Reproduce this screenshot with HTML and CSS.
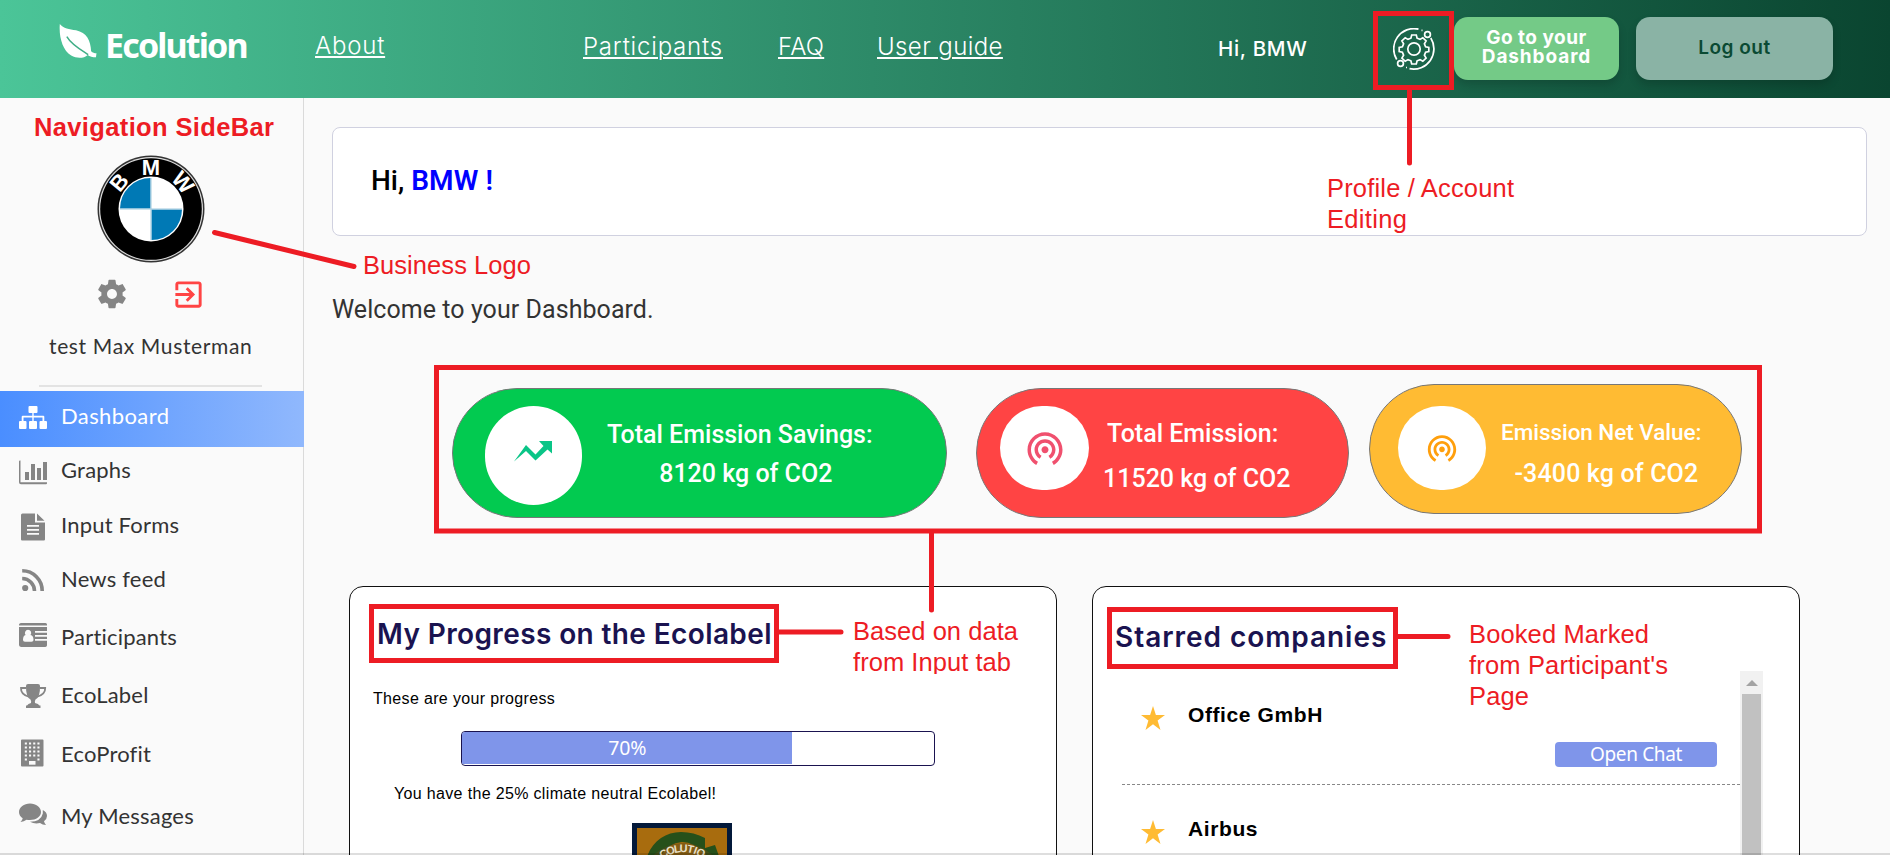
FILE: index.html
```html
<!DOCTYPE html>
<html lang="en">
<head>
<meta charset="utf-8">
<title>Ecolution Dashboard</title>
<link rel="stylesheet" href="styles.css">
</head>
<body>
<header class="topbar">
  <a class="brand">
    <svg class="leaf" viewBox="0 0 38 36"><path fill="#fff" d="M0.300 0C4 5 10 5.300 17 6.500C28 9 32 17 32.500 28C34 29.500 36 30 38 30.200L37.500 34.300C34 34.300 31 33.500 29 31.800C25 35.500 18 35.800 12 32.500C3 27 -.8 13 .3 0Z"/><path fill="none" stroke="#3fae86" stroke-width="1.500" d="M7.500 13C12 21 21 26 29.500 31.500"/></svg>
    <span class="brand-name">Ecolution</span>
  </a>
  <nav class="links">
    <a class="about">About</a><a class="parts">Participants</a><a class="faq">FAQ</a><a class="guide">User guide</a>
  </nav>
  <span class="hello">Hi, BMW</span>
  <svg class="orbit" viewBox="0 0 42 42" fill="none" stroke="#fff" stroke-width="1.700">
    <path d="M25.500 1.100A20.300 20.300 0 0 0 3.700 31.500M37.800 10A20.300 20.300 0 0 1 16.500 40.700M28.500 2.300h1M13 39.500h1"/>
    <circle cx="34.500" cy="6.500" r="2.900"/><circle cx="7.500" cy="35.500" r="2.900"/>
    <circle cx="21" cy="21" r="6.200"/>
    <path d="M18.700 7h4.600l.8 3.200 2.900 1.200 2.800-1.700 3.300 3.300-1.700 2.800 1.200 2.900 3.200.8v4l-3.200.8-1.200 2.900 1.700 2.800-3.300 3.300-2.800-1.700-2.900 1.200-.8 3.200h-4.600l-.8-3.200-2.900-1.200-2.800 1.700-3.300-3.300 1.700-2.800-1.200-2.900-3.200-.8v-4l3.200-.8 1.200-2.900-1.700-2.800 3.300-3.300 2.800 1.700 2.900-1.200z"/>
  </svg>
  <button class="btn btn-dash"><span class="l1">Go to your</span><span class="l2">Dashboard</span></button>
  <button class="btn btn-out"><span>Log out</span></button>
</header>

<div class="layout">
  <aside class="sidebar">
    <svg class="logo" viewBox="-54 -54 108 108">
      <circle r="53.500" fill="#333"/><circle r="52" fill="#ddd"/><circle r="50.800" fill="#000"/>
      <circle r="32.500" fill="#fff"/>
      <path fill="#0079b5" d="M-.5-.5V-31A30.700 30.700 0 0 0-31-.5ZM.5.500V31A30.700 30.700 0 0 0 31 .5Z"/>
      <path stroke="#9cc7dc" stroke-width="1" d="M-31 0H31M0-31V31"/>
      <g class="logo-letters"><text transform="rotate(-50)" y="-34">B</text><text y="-34">M</text><text transform="rotate(50)" y="-34">W</text></g>
    </svg>
    <div class="tools">
      <svg class="cog" viewBox="0 0 24 24" fill="#858585"><path d="M19.430 12.980c.04-.32.07-.64.07-.98s-.03-.66-.07-.98l2.110-1.650c.19-.15.24-.42.12-.64l-2-3.460c-.12-.22-.39-.3-.61-.22l-2.490 1c-.52-.4-1.080-.73-1.690-.98l-.38-2.650C14.460 2.180 14.250 2 14 2h-4c-.25 0-.46.18-.49.42l-.38 2.650c-.61.25-1.170.59-1.690.98l-2.490-1c-.23-.09-.49 0-.61.22l-2 3.460c-.13.22-.07.49.12.64l2.110 1.650c-.04.32-.07.65-.07.98s.03.66.07.98l-2.110 1.650c-.19.15-.24.42-.12.64l2 3.460c.12.22.39.3.61.22l2.490-1c.52.4 1.080.73 1.690.98l.38 2.650c.03.24.24.42.49.42h4c.25 0 .46-.18.49-.42l.38-2.650c.61-.25 1.170-.59 1.690-.98l2.490 1c.23.09.49 0 .61-.22l2-3.460c.12-.22.07-.49-.12-.64l-2.110-1.650zM12 15.500c-1.930 0-3.500-1.570-3.500-3.500s1.570-3.500 3.500-3.500 3.500 1.570 3.500 3.500-1.570 3.500-3.500 3.500z"/></svg>
      <svg class="exit" viewBox="0 0 24 24" fill="#ff4444"><path d="M10.090 15.590L11.500 17l5-5-5-5-1.410 1.410L12.670 11H3v2h9.670l-2.580 2.590zM19 3H5c-1.110 0-2 .9-2 2v4h2V5h14v14H5v-4H3v4c0 1.100.89 2 2 2h14c1.100 0 2-.9 2-2V5c0-1.100-.9-2-2-2z"/></svg>
    </div>
    <div class="user">test Max Musterman</div>
    <div class="rule"></div>
    <ul class="menu">
      <li class="active"><svg viewBox="0 0 28 28"><path d="M10.500 2h7a1 1 0 0 1 1 1v5a1 1 0 0 1-1 1h-2.800v2.800h9.600a1 1 0 0 1 1 1v4.200h1.700a1 1 0 0 1 1 1v6a1 1 0 0 1-1 1h-5.500a1 1 0 0 1-1-1v-6a1 1 0 0 1 1-1h2v-3.400h-8.800v3.400h2.300a1 1 0 0 1 1 1v6a1 1 0 0 1-1 1h-6a1 1 0 0 1-1-1v-6a1 1 0 0 1 1-1h2.300v-3.400H4.500v3.400h2a1 1 0 0 1 1 1v6a1 1 0 0 1-1 1H1a1 1 0 0 1-1-1v-6a1 1 0 0 1 1-1h1.700v-4.200a1 1 0 0 1 1-1h9.600V9h-2.800a1 1 0 0 1-1-1V3a1 1 0 0 1 1-1Z"/></svg><span>Dashboard</span></li>
      <li class="graphs"><svg viewBox="0 0 28 28"><path d="M0 3.500A1 1 0 0 1 1 2.500H1.500V24.300H28V25.500A1 1 0 0 1 27 26.300H2A2 2 0 0 1 0 24.300ZM6 14h4v8H6ZM12 6h4v16h-4ZM18 10h4v12h-4ZM24 4h4v18h-4Z"/></svg><span>Graphs</span></li>
      <li class="forms"><svg viewBox="0 0 28 28"><path fill-rule="evenodd" d="M3.500.500H16V9.500H26V26.500A1.200 1.200 0 0 1 25 27.500H3A1.200 1.200 0 0 1 2 26.500V2A1.500 1.500 0 0 1 3.500.500ZM8 12v1.800h12V12ZM8 16v1.800h12V16ZM8 20v1.800h12V20ZM18 .500 25.500 7.700H18Z"/></svg><span>Input Forms</span></li>
      <li class="news"><svg viewBox="0 0 28 28"><circle cx="6.200" cy="22" r="3.100"/><path fill="none" stroke="#858585" stroke-width="3.600" d="M3.200 12.500A12.500 12.500 0 0 1 15.500 25M3.200 4.800A20 20 0 0 1 23.200 25"/></svg><span>News feed</span></li>
      <li class="people"><svg viewBox="0 0 28 28"><path fill-rule="evenodd" d="M2 2H26.500Q28 2.200 28 3.500V4.500H0V3.500Q.3 2 2 2ZM0 6H28V10H16V11.700H28V14H16V15.700H28V18H16V19.700H28V24.500Q27.500 26 26 26H2Q0 25.700 0 24ZM9 8.800A3.200 3.200 0 0 0 6.600 14Q4 14.500 4 19Q4 20.700 6 20.700H12.500Q14.500 20.700 14.500 19Q14.500 14.500 11.500 14A3.200 3.200 0 0 0 9 8.800Z"/></svg><span>Participants</span></li>
      <li class="trophy"><svg viewBox="0 0 28 28"><path d="M7 4Q7 2 9 2H19Q21 2 21 4Q21.300 15 16.500 17.500Q15.500 19 16 21Q19.500 21.700 20.500 23.500H21.500V26H7V23.500H8Q9 21.700 12 21Q12.500 19 11.500 17.500Q6.800 15 7 4Z"/><path fill="none" stroke="#858585" stroke-width="1.800" d="M7.500 6H2Q1.500 12.500 10.500 15M20.500 6H26.200Q26.500 12.500 17.500 15"/></svg><span>EcoLabel</span></li>
      <li class="building"><svg viewBox="0 0 28 28"><path d="M3 .5H23.500A1 1 0 0 1 24.500 1.500V26.500A1 1 0 0 1 23.500 27.500H3A1 1 0 0 1 2 26.500V1.500A1 1 0 0 1 3 .5Z"/><path stroke="#fafafa" stroke-width="2" stroke-dasharray="2.100 2.100" d="M5.800 4.500H22M5.800 8.500H22M5.800 12.500H22M5.800 16.500H22M5.800 20.500H8M18.400 20.500H21"/><path fill="#fafafa" d="M10 22h6.500v3.700H10z"/></svg><span>EcoProfit</span></li>
      <li class="msgs"><svg viewBox="0 0 28 28"><path d="M11 2.500C17 2.500 22 6.300 22 11S17 19 11 19Q9 19 7.500 18.700Q5 20.800 1.500 21Q3.300 19.500 3.700 17.200Q0 14.800 0 11C0 6.300 5 2.500 11 2.500ZM23.800 9Q28 11 28 15Q28 18 25 20.200Q25.500 22.500 27 24Q23.500 24 21 22Q15.500 23.200 11 20.800Q22 20.500 23.800 12.500Z"/></svg><span>My Messages</span></li>
    </ul>
  </aside>

  <main class="content">
    <section class="greeting"><span>Hi,</span> <b>BMW !</b></section>
    <p class="welcome">Welcome to your Dashboard.</p>
    <section class="stats">
      <div class="pill green">
        <div class="disc"><svg width="38" height="22" viewBox="0 0 38 22"><path fill="#0ac587" d="M0 21.500 12 5 21.500 14.500 29.500 6 25 1H38V13.500L33.500 9.500 21.500 20.500 12 11Z"/></svg></div>
        <div class="fig"><span class="t1">Total Emission Savings:</span><span class="t2">8120 kg of CO2</span></div>
      </div>
      <div class="pill red">
        <div class="disc"><svg width="42" height="42" viewBox="0 0 24 24" fill="#f0506e"><path id="ring" d="M12 11c-1.100 0-2 .9-2 2s.9 2 2 2 2-.9 2-2-.9-2-2-2zm6 2c0-3.310-2.690-6-6-6s-6 2.690-6 6c0 2.220 1.210 4.150 3 5.190l1-1.740c-1.190-.7-2-1.970-2-3.450 0-2.210 1.790-4 4-4s4 1.790 4 4c0 1.480-.81 2.750-2 3.450l1 1.740c1.790-1.040 3-2.970 3-5.190zM12 3C6.480 3 2 7.480 2 13c0 3.700 2.010 6.920 4.990 8.650l1-1.730C5.610 18.530 4 15.960 4 13c0-4.420 3.580-8 8-8s8 3.580 8 8c0 2.960-1.610 5.530-4 6.920l1 1.730c2.990-1.730 5-4.950 5-8.650 0-5.520-4.480-10-10-10z"/></svg></div>
        <div class="fig"><span class="t1">Total Emission:</span><span class="t2">11520 kg of CO2</span></div>
      </div>
      <div class="pill amber">
        <div class="disc"><svg width="34" height="34" viewBox="0 0 24 24" fill="#ff9f0c"><use href="#ring"/></svg></div>
        <div class="fig"><span class="t1">Emission Net Value:</span><span class="t2">-3400 kg of CO2</span></div>
      </div>
    </section>
    <section class="cards">
      <article class="card progress">
        <h2>My Progress on the Ecolabel</h2>
        <p class="intro">These are your progress</p>
        <div class="bar"><div class="fill" style="width:70%"><span>70%</span></div></div>
        <p class="result">You have the 25% climate neutral Ecolabel!</p>
        <svg class="badge" viewBox="0 0 100 100">
          <path fill="#03193a" d="M0 0h100v100H0z"/><path fill="#a86c0e" d="M5 5h90v90H5z"/>
          <path fill="#26501a" d="M12 50C13 24 29 9 49 9Q62 9 73 15V25L83 22L93 50H73L74 32Q62 19 50 19Q28 21 24 50Z"/>
          <circle cx="51" cy="62" r="42" fill="#5b4a18" opacity=".5"/>
          <g class="badge-letters"><text transform="translate(51 62) rotate(-32)" y="-33">C</text><text transform="translate(51 62) rotate(-20)" y="-33">O</text><text transform="translate(51 62) rotate(-9)" y="-33">L</text><text transform="translate(51 62) rotate(1)" y="-33">U</text><text transform="translate(51 62) rotate(12)" y="-33">T</text><text transform="translate(51 62) rotate(20)" y="-33">I</text><text transform="translate(51 62) rotate(29)" y="-33">O</text></g>
        </svg>
      </article>
      <article class="card starred">
        <h2>Starred companies</h2>
        <div class="scroller">
          <div class="list">
            <div class="company first"><svg class="star" viewBox="0 0 24 24"><path d="M12 0 14.900 9H24L16.600 14.500 19.500 24 12 18.200 4.500 24 7.400 14.500 0 9H9.100Z"/></svg><span class="office">Office GmbH</span><button class="chat"><span>Open Chat</span></button></div>
            <div class="company"><svg class="star" viewBox="0 0 24 24"><path d="M12 0 14.900 9H24L16.600 14.500 19.500 24 12 18.200 4.500 24 7.400 14.500 0 9H9.100Z"/></svg><span class="airbus">Airbus</span></div>
          </div>
          <div class="track"><i class="up"></i><i class="thumb"></i></div>
        </div>
      </article>
    </section>
  </main>
</div>

<svg class="notes" width="1890" height="855">
  <g class="frames">
    <path d="M1375.500 13.500H1451.500V87.500H1375.500ZM436.500 367.500H1759.500V531H436.500ZM371.500 606.500H776.500V660.500H371.500ZM1109.500 609.500H1395.500V666.500H1109.500Z"/>
    <path stroke-linecap="round" d="M1409.500 90V163M214.500 232.500L354 266.500M931.500 533V610M779 632H841M1398 636.500H1448"/>
  </g>
  <text class="strong" x="34" y="136" textLength="240">Navigation SideBar</text>
  <text x="363" y="274" textLength="168">Business Logo</text>
  <text x="1327" y="196.500" textLength="187">Profile / Account</text>
  <text x="1327" y="227.500" textLength="80">Editing</text>
  <text x="853" y="639.500" textLength="165">Based on data</text>
  <svg width="1100" height="674"><text x="853" y="670.500" textLength="158">from Input tab</text></svg>
  <text x="1469" y="643" textLength="180">Booked Marked</text>
  <text x="1469" y="674" textLength="199">from Participant's</text>
  <text x="1469" y="705" textLength="60">Page</text>
</svg>
<div class="edge"></div>
</body>
</html>
```
FILE: styles.css
```css
* { box-sizing: border-box; }
html { height: 855px; overflow: hidden; }
body { margin: 0; width: 1890px; height: 855px; overflow: hidden; background: #fafafa; font-family: Roboto, sans-serif; color: #000; }
h2, p, ul { margin: 0; padding: 0; }
span, a, h2, p { white-space: nowrap; }
svg { display: block; flex: none; }
button { border: 0; padding: 0; }

.topbar { height: 98px; display: flex; align-items: flex-start; background: linear-gradient(90deg, #4bc598 0%, #0a4530 100%); color: #fff; font-family: Inter, sans-serif; }
.brand { display: flex; width: 256px; height: 98px; padding: 24px 0 0 59px; }
.leaf { width: 38px; height: 35px; }
.brand-name { margin: -3px 0 0 8px; font: 700 34px/48px "Noto Sans", sans-serif; letter-spacing: -1.85px; }
.links { display: flex; width: 962px; padding: 31px 0 0 59px; font-size: 24px; line-height: 32px; font-weight: 300; }
.links a { flex: none; text-decoration: underline; text-decoration-thickness: 2px; text-underline-offset: 2px; letter-spacing: .8px; }
.links .about { width: 268px; margin-top: -1px; }
.parts { width: 195px; }
.links .faq { width: 99px; letter-spacing: .2px; }
.links .guide { letter-spacing: .4px; }
.hello { width: 175px; padding-top: 35px; font-size: 20.500px; line-height: 28px; font-weight: 500; letter-spacing: .7px; }
.orbit { width: 42px; height: 42px; margin-top: 28px; }
.btn { height: 63px; margin-top: 17px; border-radius: 14px; font-family: Inter, sans-serif; font-size: 19px; display: flex; flex-direction: column; align-items: center; justify-content: center; box-shadow: 0 5px 9px rgba(0, 0, 0, .16); }
.btn-dash { width: 165px; margin-left: 19px; background: #74ca87; color: #fff; font-weight: 700; line-height: 19px; padding-bottom: 3px; }
.l1 { letter-spacing: .5px; }
.l2 { letter-spacing: .9px; }
.btn-out { width: 197px; margin-left: 17px; background: #8ab3a5; color: #0b4a33; font-weight: 600; letter-spacing: .5px; padding-bottom: 2px; }

.layout { display: flex; height: 757px; overflow: hidden; }
.sidebar { width: 304px; border-right: 1px solid #dadada; font-family: Lato, sans-serif; color: #333; flex: none; }
.logo { width: 108px; height: 108px; margin: 57px 0 0 97px; }
.logo-letters { font: 700 22px "Liberation Sans", sans-serif; fill: #fff; text-anchor: middle; }
.tools { display: flex; padding: 14px 0 0 95px; gap: 42px; }
.cog { width: 34px; height: 34px; }
.exit { width: 35px; height: 35px; }
.user { margin-top: 12px; height: 67px; padding: 6px 0 0 49px; font-size: 21px; line-height: 32px; letter-spacing: .65px; }
.rule { width: 223px; height: 2px; margin: -6px 0 4px 39px; background: #e3e3e3; }
.menu { list-style: none; }
.menu li { height: 28px; display: flex; align-items: center; gap: 14px; padding-left: 19px; font-size: 22px; line-height: 28px; letter-spacing: .2px; }
.menu svg { width: 28px; height: 28px; fill: #858585; }
.menu li.active { width: 304px; height: 56px; background: linear-gradient(90deg, #4a8eff, #90b8fd); color: #fff; letter-spacing: .4px; }
.menu .active svg { fill: #fff; margin-bottom: 2px; }
.active span { margin-bottom: 6px; }
.menu .graphs { margin-top: 9px; }
.graphs svg { margin-top: 4px; }
.menu .forms { margin-top: 27px; }
.forms svg { margin-top: 3px; }
.menu .news { margin-top: 26px; }
.news svg { margin-top: 2px; }
.menu .people { margin-top: 30px; }
.people svg { margin-bottom: 4px; }
.menu .trophy { margin-top: 30px; }
.trophy svg { margin-top: 2px; }
.menu .building { margin-top: 31px; }
.building svg { margin-bottom: 2px; }
.menu .msgs { margin-top: 34px; }
.msgs svg { margin-bottom: 2px; }

.content { width: 1586px; padding: 29px 0 0 28px; }
.greeting { width: 1535px; height: 109px; border: 1px solid #d0d1e0; border-radius: 8px; background: #fff; padding: 35px 0 0 38px; font-size: 28px; line-height: 36px; font-weight: 500; }
.greeting b { color: #00f; font-weight: 600; letter-spacing: .1px; }
.welcome { margin-top: 58px; font-size: 25px; line-height: 32px; color: #333; letter-spacing: .06px; }
.stats { display: flex; margin-top: 58px; padding-left: 120px; height: 134px; }
.pill { height: 130px; border: 1px solid #777; border-radius: 65px; display: flex; margin-top: 4px; color: #fff; font-size: 25px; font-weight: 500; }
.disc { background: #fff; border-radius: 50px; display: flex; align-items: center; justify-content: center; flex: none; }
.fig { display: flex; flex-direction: column; align-items: center; line-height: 32px; }
.green { width: 495px; background: #02ca50; }
.green .disc { width: 97px; height: 99px; margin: 17px 0 0 32px; }
.green .disc svg { margin: -9px 1px 0 0; }
.green .fig { margin: 30px 0 0 25px; }
.green .t2 { margin: 7px 0 0 12px; }
.red { width: 373px; margin-left: 29px; background: #ff4444; }
.red .disc { width: 89px; height: 84px; margin: 17px 0 0 23px; border-radius: 42px; }
.red .fig { margin: 29px 0 0 14px; }
.red .t1 { margin-left: -8px; }
.red .t2 { margin-top: 13px; }
.amber { width: 373px; margin: 0 0 0 20px; background: #ffbb33; }
.amber .disc { width: 88px; height: 84px; margin: 21px 0 0 28px; border-radius: 42px; }
.amber .fig { margin: 31px 0 0 15px; align-items: flex-end; }
.amber .t1 { font-size: 22.500px; letter-spacing: -.05px; }
.amber .t2 { margin: 10px 3px 0 0; letter-spacing: .15px; }

.cards { display: flex; gap: 35px; margin: 68px 0 0 17px; }
.card { width: 708px; height: 320px; border: 1px solid #111; border-radius: 14px; background: #fff; }
.card h2 { font: 600 28px/36px Inter, sans-serif; color: #1a1350; letter-spacing: .38px; }
.progress h2 { margin: 29px 0 1px 27px; }
.intro, .result { font: 16px/20px "Liberation Sans", sans-serif; letter-spacing: .34px; }
.intro { margin: 37px 0 0 23px; }
.bar { width: 474px; height: 35px; margin: 22px 0 0 111px; border: 1px solid #1a1350; border-radius: 4px; overflow: hidden; }
.fill { height: 32px; background: #7f95ea; color: #fff; display: flex; align-items: center; justify-content: center; font: 19.500px/34px "Noto Sans", sans-serif; letter-spacing: -.2px; }
.result { margin: 18px 0 0 44px; }
.badge { width: 100px; height: 100px; margin: 19px 0 0 282px; }
.badge-letters { font: 700 11px "Liberation Sans", sans-serif; fill: #e8e0c8; text-anchor: middle; }
.card.starred h2 { margin: 32px 0 0 22px; letter-spacing: .95px; }
.scroller { display: flex; margin: 16px 0 0 29px; width: 642px; height: 184px; }
.list { width: 618px; }
.company { display: flex; padding: 35px 0 0 19px; font: 700 21px/26px "Liberation Sans", sans-serif; letter-spacing: .6px; }
.company.first { height: 114px; border-bottom: 1px dashed #888; }
.star { width: 24px; height: 24px; fill: #ffbb33; }
.company span { margin: -4px 0 0 23px; }
.company .office { width: 145px; }
.chat { width: 162px; height: 25px; margin: 36px 0 0 222px; border-radius: 4px; background: #7f95ea; color: #fff; font: 19px/25px "Noto Sans", sans-serif; letter-spacing: -.35px; }
.company .chat span { margin: 0; }
.track { width: 23px; background: #f1f1f1; display: flex; flex-direction: column; align-items: center; }
.up { border: 6px solid transparent; border-top: 0; border-bottom: 6px solid #a3a3a3; margin-top: 9px; }
.thumb { width: 19px; height: 170px; margin-top: 8px; background: #c1c1c1; }

.notes { position: absolute; left: 0; top: 0; fill: #ed1c24; font: 25.500px "Liberation Sans", sans-serif; }
.notes .strong { font-weight: 700; }
.frames { fill: none; stroke: #ed1c24; stroke-width: 5; }
.edge { position: absolute; left: 0; bottom: 0; width: 1890px; height: 2px; background: rgba(0, 0, 0, .13); }
```
